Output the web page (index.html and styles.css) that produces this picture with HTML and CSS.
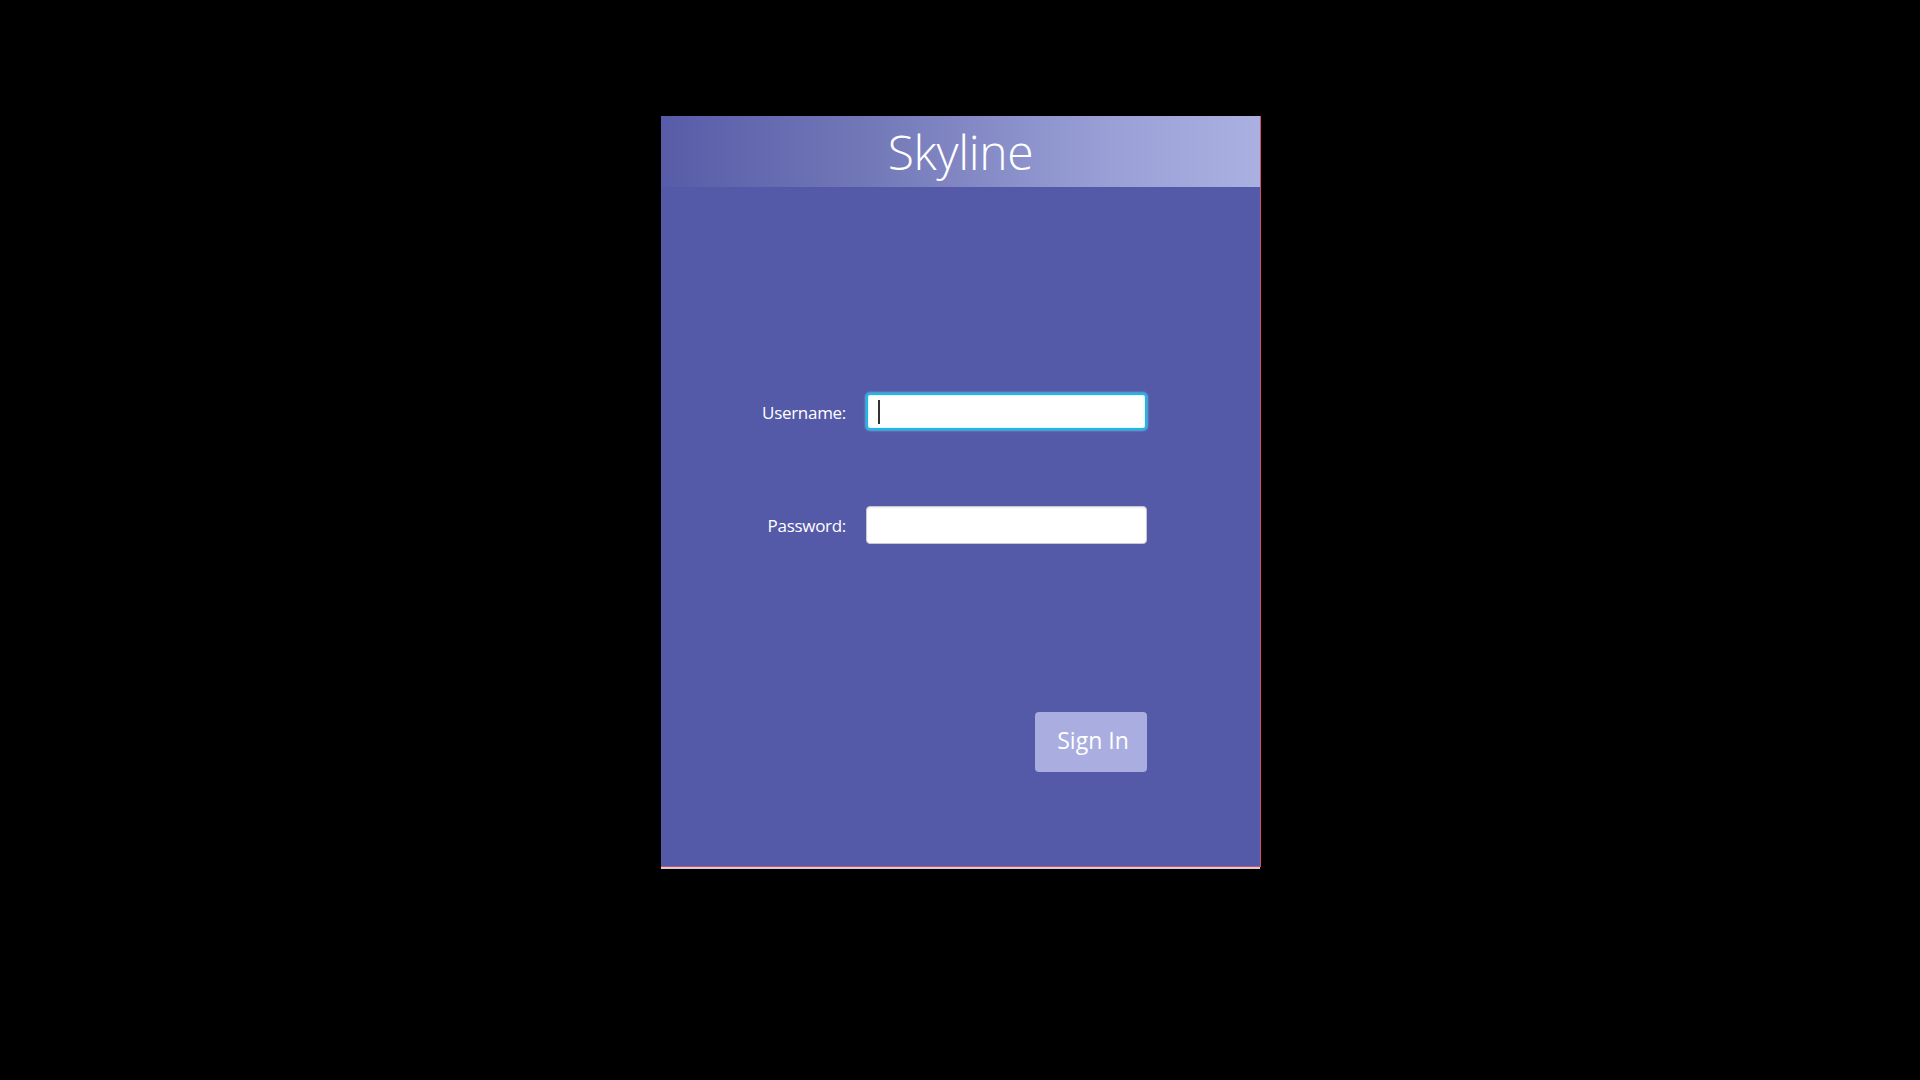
FILE: index.html
```html
<!DOCTYPE html>
<html lang="en">
<head>
<meta charset="utf-8">
<title>Skyline</title>
<link rel="stylesheet" href="styles.css">
</head>
<body>
  <div class="window">
    <div class="panel">
      <header class="header">
        <h1 class="title">Skyline</h1>
      </header>
      <form class="form">
        <div class="fields">
          <label class="label" for="user">Username:</label>
          <div class="input input-focused" id="user"><span class="caret"></span></div>
          <label class="label label-pass" for="pass">Password:</label>
          <div class="input" id="pass"></div>
        </div>
        <div class="actions">
          <button type="button" class="btn">Sign In</button>
        </div>
      </form>
    </div>
    <div class="shadow-line"></div>
  </div>
</body>
</html>
```

FILE: styles.css
```css
html, body {
  margin: 0;
  padding: 0;
  background: #000;
  width: 1920px;
  height: 1080px;
  overflow: hidden;
}

body {
  font-family: "Open Sans", "Noto Sans", "Liberation Sans", sans-serif;
}

.window {
  margin-left: 661px;
  padding-top: 116px;
  width: 600px;
}

.panel {
  box-sizing: border-box;
  width: 600px;
  height: 751px;
  background: #5459a8;
  border-right: 1px solid #d84a6e;
  border-bottom: 1px solid #d84a6e;
  display: flex;
  flex-direction: column;
}

.shadow-line {
  width: 599px;
  height: 2px;
  background: #cfcfd4;
}

.header {
  height: 71px;
  background: linear-gradient(to right, #585ca8 0%, #7378b8 35%, #9aa0d6 75%, #aab0e0 100%);
  display: flex;
  align-items: center;
  justify-content: center;
}

.title {
  margin: 0;
  color: #fff;
  font-weight: 300;
  font-size: 48px;
  line-height: 1;
  letter-spacing: -0.3px;
}

.form {
  padding-top: 206px;
  padding-left: 45px;
  padding-right: 113px;
  display: flex;
  flex-direction: column;
}

.fields {
  display: grid;
  grid-template-columns: 140px 281px;
  column-gap: 20px;
  row-gap: 76px;
  align-items: center;
}

.label {
  justify-self: end;
  color: #fff;
  font-size: 17px;
  letter-spacing: -0.3px;
  padding-top: 2px;
}

.label-pass {
  padding-top: 0;
}

.input {
  box-sizing: border-box;
  height: 38px;
  width: 281px;
  background: #fff;
  border: 1px solid #c8c8d0;
  border-radius: 4px;
  box-shadow: inset 0 1px 2px rgba(0,0,0,0.08);
  display: flex;
  align-items: center;
  padding-left: 10px;
}

.input-focused {
  height: 37px;
  border: 2px solid #1fb8e6;
  box-shadow: 0 0 2px 1px rgba(110, 220, 250, 0.6), inset 0 0 2px rgba(31,184,230,0.4);
}

.caret {
  width: 2px;
  height: 24px;
  background: #333;
}

.actions {
  display: flex;
  justify-content: flex-end;
  padding-top: 168px;
}

.btn {
  width: 112px;
  height: 60px;
  background: #a9addf;
  border: none;
  border-radius: 4px;
  color: #fff;
  font-family: inherit;
  font-size: 23px;
  padding: 0 0 4px 4px;
}
```
